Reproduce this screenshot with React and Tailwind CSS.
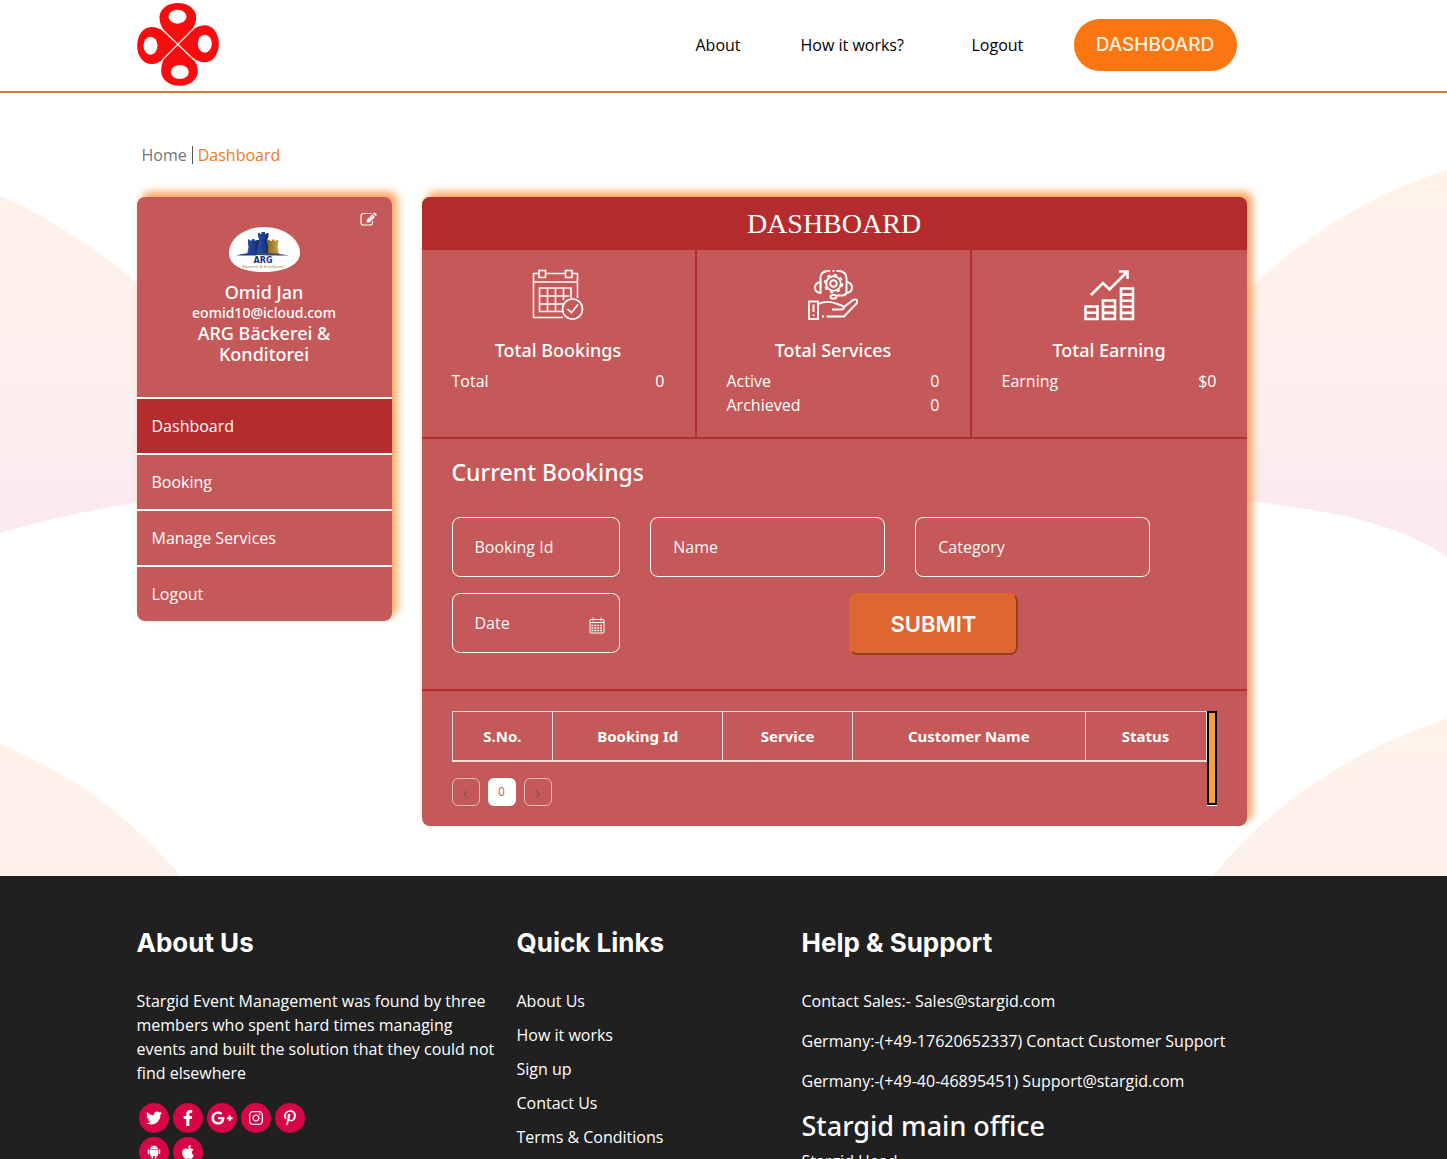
import React from "react";
import {
  FaApple,
  FaFacebookF,
  FaGooglePlusG,
  FaInstagram,
  FaPinterestP,
  FaTwitter,
} from "react-icons/fa";
import { IoLogoAndroid } from "react-icons/io";

function Logo() {
  return (
    <svg viewBox="52 9 245 249" className="h-[83px] w-[82px]" role="img" aria-label="Stargid">
      <g fill="#f70d0d">
        <path d="M174 133 L134 93 C124 82 119 68 119 52 C119 27 144 9 174 9 C204 9 229 27 229 52 C229 68 224 80 214 91 Z" />
        <path d="M174 133 L134 174 C128 184 124 197 124 213 C124 240 149 257 179 257 C210 257 234 240 234 213 C234 197 228 186 218 176 Z" />
        <path d="M174 133 L134 96 C122 86 108 81 94 81 C70 81 52 106 52 137 C52 168 70 192 95 192 C110 192 122 184 131 176 Z" />
        <path d="M174 133 L214 94 C226 82 240 76 255 76 C279 76 297 100 297 131 C297 163 279 187 255 187 C240 187 229 181 218 173 Z" />
      </g>
      <g fill="#fff">
        <ellipse cx="173" cy="50" rx="27" ry="21" />
        <ellipse cx="180" cy="216" rx="27" ry="21" />
        <ellipse cx="92" cy="137" rx="21" ry="27" />
        <ellipse cx="255" cy="131" rx="21" ry="27" />
      </g>
      <path d="M128 89 L224 181 M220 87 L128 179" stroke="#ffe6e4" strokeWidth="4" />
    </svg>
  );
}

function BakeryLogo() {
  return (
    <svg viewBox="0 0 71 45" className="h-[45px] w-[71px]" role="img" aria-label="ARG Bäckerei & Konditorei">
      <defs>
        <linearGradient id="tower" x1="0" x2="1">
          <stop offset="0" stopColor="#2d52a8" />
          <stop offset="1" stopColor="#142a72" />
        </linearGradient>
        <linearGradient id="gold" x1="0" x2="1">
          <stop offset="0" stopColor="#8d6a1e" />
          <stop offset="1" stopColor="#d3a545" />
        </linearGradient>
      </defs>
      <path d="M0 26 C0 11 16 0 35 0 C55 0 71 12 71 26 C71 38 55 45 35 45 C14 45 0 39 0 26 Z" fill="#fff" />
      <path d="M18 28 L19.500 20 L19 17 V12.500 H21 V13.500 H23 V12 H25.500 V13.500 H27.500 V13 H30 V28 Z" fill="url(#tower)" />
      <path d="M28 28 L30 12 L29 9.500 V6 H31 V7 H32.500 V5 H36 V7 H37.500 V6 H39.500 V9.500 L38.500 12 L39.500 26 Z" fill="url(#tower)" />
      <path d="M39 27.500 V13 H41 V14 H43 V12.500 H45.500 V14 H47 V13 H49 V17 L48.500 20 L50 27.500 Z" fill="url(#gold)" />
      <path d="M7 28.500 Q20 25 28 26 L27 28.500 Z" fill="#1d3a8c" />
      <path d="M28 26 Q45 25 60 28.500 H40 L28 28 Z" fill="#3c4a70" />
      <text x="34" y="36" textAnchor="middle" fontSize="8" fontWeight="800" fontFamily="DejaVu Sans" fill="#16307f">ARG</text>
      <text x="34" y="41" textAnchor="middle" fontSize="4" fontFamily="Noto Sans" fill="#bd9142">Bäckerei &amp; Konditorei</text>
    </svg>
  );
}

function EditIcon() {
  return (
    <svg viewBox="0 0 17 14" className="h-[14px] w-[17px]" aria-hidden="true">
      <path
        d="M11.500 1.500 H3.500 Q1 1.500 1 4 V10.500 Q1 13 3.500 13 H10 Q12.500 13 12.500 10.500 V9"
        fill="none"
        stroke="#fff"
        strokeWidth="1.200"
      />
      <path d="M12.300 2.200 L15 4.900 L9.300 10.600 H6.600 V7.900 Z M13 1.500 L13.900 0.600 Q14.500 0.200 15.100 0.700 L16.500 2.100 Q17 2.700 16.500 3.300 L15.700 4.200 Z" fill="#fff" />
      <path d="M12.300 4 L9 7.300" stroke="#c55858" strokeWidth="0.700" />
    </svg>
  );
}

function BookingsIcon() {
  return (
    <svg viewBox="0 0 52 52" className="size-[52px]" fill="none" stroke="#fff" strokeWidth="1.6" aria-hidden="true">
      <path d="M7 4.500 H1.500 V48.500 H31 M14 4.500 H33 M40 4.500 H45.500 V29 M1.500 13 H45.500" />
      <rect x="7" y="1.500" width="6.500" height="7" />
      <rect x="33.500" y="1.500" width="6.500" height="7" />
      <path d="M30 42.500 H7.500 V19 H39 V29 M7.500 27 H37 M7.500 35 H31 M15.500 19 V42.500 M23.500 19 V42.500 M31.500 19 V31" />
      <circle cx="40.500" cy="40" r="10" />
      <path d="M35.500 40 L39.500 43.500 L46 35.500" />
    </svg>
  );
}

function ServicesIcon() {
  return (
    <svg viewBox="0 0 52 52" className="size-[52px]" fill="none" stroke="#fff" strokeWidth="1.9" aria-hidden="true">
      <rect x="2" y="32.500" width="9" height="17.500" />
      <path d="M6.500 35.500 V43 M6.500 45.500 V47" />
      <path d="M11 35 Q21 31 29 34.500 L36 37 Q38 41 34 40.500 L25 40.500 M37 38 L46 31 Q51 29 50 34 L37 47.500 H19.500 M17 47.500 H15" />
      <path d="M13.500 19 V8 Q14 3 20 2 H23 M25.500 2 H27.500 M29.500 2 H33 Q39 3 39.500 9 V23 Q39 26.500 35 26.500 H30" />
      <path d="M13.500 13 Q8 14 8 18.500 Q8 23.500 13.500 24 Z M39.500 13 Q45 14 45 18.500 Q45 23.500 39.500 24" />
      <rect x="23.500" y="26" width="6" height="3.500" rx="1.700" />
      <circle cx="26.500" cy="14.500" r="3.300" />
      <circle cx="26.500" cy="14.500" r="7.300" />
      <circle cx="26.500" cy="14.500" r="8.900" strokeWidth="1.800" strokeDasharray="3.200 3.790" />
    </svg>
  );
}

function EarningIcon() {
  return (
    <svg viewBox="0 0 52 52" className="size-[52px]" fill="none" stroke="#fff" strokeWidth="2.600" aria-hidden="true">
      <path d="M8 26 L20 14 L26.500 20.500 L43 4 M36 2.500 H44.500 V10" />
      <path d="M2.500 37.500 H14.500 V50 H2.500 Z M2.500 43.700 H14.500" />
      <path d="M20 31.500 H32 V50 H20 Z M20 37.700 H32 M20 43.900 H32" />
      <path d="M38 19.500 H50 V50 H38 Z M38 25.600 H50 M38 31.700 H50 M38 37.800 H50 M38 43.900 H50" />
    </svg>
  );
}

function CalendarIcon() {
  return (
    <svg viewBox="0 0 16 17" className="h-[17px] w-4" fill="none" stroke="#fff" aria-hidden="true">
      <rect x="1" y="2.500" width="14" height="13.500" rx="1" />
      <path d="M1 5.500 H15 M4 0.500 V4 M12 0.500 V4" />
      <path d="M2.500 8.500 H13.500 M2.500 11 H13.500 M2.500 13.500 H13.500" strokeWidth="1.500" strokeDasharray="1.800 1.100" />
    </svg>
  );
}

function Backdrop() {
  return (
    <svg
      viewBox="0 0 1447 783"
      preserveAspectRatio="none"
      className="absolute inset-0 -z-10 h-full w-full"
      aria-hidden="true"
    >
      <defs>
        <linearGradient id="wash" gradientUnits="userSpaceOnUse" x1="0" y1="80" x2="0" y2="460">
          <stop offset="0" stopColor="#fff3e9" />
          <stop offset="0.550" stopColor="#fcefee" />
          <stop offset="1" stopColor="#fae9f0" />
        </linearGradient>
        <linearGradient id="wash2" gradientUnits="userSpaceOnUse" x1="0" y1="629" x2="0" y2="1009">
          <stop offset="0" stopColor="#fff3e9" />
          <stop offset="0.550" stopColor="#fcefee" />
          <stop offset="1" stopColor="#fae9f0" />
        </linearGradient>
      </defs>
      <path fill="url(#wash)" d="M0 103 Q70 133 137 190 L300 300 V400 Q200 400 137 410 Q70 420 0 440 Z" />
      <path fill="url(#wash)" d="M1447 77 Q1340 110 1253 193 L1150 280 V400 Q1200 402 1253 409 Q1395 424 1447 465 Z" />
      <path fill="url(#wash2)" d="M0 651 Q105 694 180 783 H0 Z" />
      <path fill="url(#wash2)" d="M1447 626 Q1302 674 1213 783 H1447 Z" />
    </svg>
  );
}

const menu = ["Dashboard", "Booking", "Manage Services", "Logout"];

const stats = [
  { title: "Total Bookings", Icon: BookingsIcon, rows: [["Total", "0"]] },
  { title: "Total Services", Icon: ServicesIcon, rows: [["Active", "0"], ["Archieved", "0"]] },
  { title: "Total Earning", Icon: EarningIcon, rows: [["Earning", "$0"]] },
];

const columns = [
  ["S.No.", "w-[101px]"],
  ["Booking Id", "w-[170px]"],
  ["Service", "w-[130px]"],
  ["Customer Name", "w-[233px]"],
  ["Status", "w-[121px]"],
];

const socials = [
  ["Twitter", FaTwitter],
  ["Facebook", FaFacebookF],
  ["Google Plus", FaGooglePlusG],
  ["Instagram", FaInstagram],
  ["Pinterest", FaPinterestP],
  ["Android", IoLogoAndroid],
  ["Apple", FaApple],
];

const quickLinks = ["About Us", "How it works", "Sign up", "Contact Us", "Terms & Conditions"];

function Field({ label, className, children }) {
  return (
    <label className={"relative block " + className}>
      <input
        type="text"
        aria-label={label}
        placeholder={label}
        className="h-[60px] w-full rounded-lg border border-white bg-transparent px-[22px] text-white placeholder:text-white placeholder:opacity-95"
      />
      {children}
    </label>
  );
}

function Header() {
  return (
    <header className="border-b-2 border-[#d07b3e] bg-white pr-16">
      <div className="mx-auto flex h-[91px] max-w-[1110px] items-start justify-between">
        <a href="#" className="pt-[3px]">
          <Logo />
        </a>
        <nav className="flex items-center pt-[19px] pr-[10px] text-black">
          <a href="#" className="w-[105px]">About</a>
          <a href="#" className="w-[171px]">How it works?</a>
          <a href="#" className="w-[102px]">Logout</a>
          <a
            href="#"
            className="flex h-[52px] w-[163px] items-center justify-center rounded-full bg-[#f97610] font-[Inter] text-[19px] font-medium text-[#fff3e0]"
          >
            DASHBOARD
          </a>
        </nav>
      </div>
    </header>
  );
}

function Sidebar() {
  return (
    <aside className="w-[255px] shrink-0 overflow-visible rounded-lg bg-[#c55858] text-white shadow-[5px_-5px_8px_#ffa057]">
      <div className="relative flex h-[200px] flex-col items-center pt-[30px] text-center font-['Noto_Sans'] font-medium">
        <button type="button" aria-label="Edit profile" className="absolute top-[15px] right-[15px]">
          <EditIcon />
        </button>
        <BakeryLogo />
        <h2 className="mt-[10px] text-[18px] leading-[21px]">Omid Jan</h2>
        <p className="text-[14px] leading-5">eomid10@icloud.com</p>
        <p className="w-[150px] text-[18px] leading-[21px]">ARG Bäckerei &amp; Konditorei</p>
      </div>
      <nav>
        {menu.map((item, i) => (
          <a
            key={item}
            href="#"
            className={
              "flex h-14 items-center border-t-2 border-white px-[15px] " +
              (i === 0 ? "bg-[#b52c2e]" : "")
            }
          >
            {item}
          </a>
        ))}
      </nav>
    </aside>
  );
}

function Stats() {
  return (
    <div className="grid grid-cols-3 border-b-2 border-[#b52c2e]">
      {stats.map(({ title, Icon, rows }, i) => (
        <section
          key={title}
          className={"h-[187px] px-[30px] pt-[19px] " + (i < 2 ? "border-r-2 border-[#b52c2e]" : "")}
        >
          <div className="flex justify-center">
            <Icon />
          </div>
          <h3 className="mt-[17px] mb-[7px] text-center font-['Noto_Sans'] text-[18px] leading-6 font-medium">{title}</h3>
          <dl>
            {rows.map(([k, v]) => (
              <div key={k} className="flex justify-between leading-6">
                <dt>{k}</dt>
                <dd>{v}</dd>
              </div>
            ))}
          </dl>
        </section>
      ))}
    </div>
  );
}

function Bookings() {
  return (
    <>
      <section className="border-b-2 border-[#b52c2e] px-[30px] pt-[17px] pb-[34px]">
        <h2 className="mb-[29px] font-['Noto_Sans'] text-[23px] leading-8 font-medium">Current Bookings</h2>
        <form className="grid grid-cols-12 gap-x-[30px] gap-y-4" onSubmit={(e) => e.preventDefault()}>
          <Field label="Booking Id" className="col-span-3" />
          <Field label="Name" className="col-span-4" />
          <Field label="Category" className="col-span-4" />
          <Field label="Date" className="col-span-3 col-start-1">
            <span className="absolute top-6 right-[15px]">
              <CalendarIcon />
            </span>
          </Field>
          <button
            type="submit"
            className="col-span-3 col-start-7 h-[62px] rounded-lg border-2 border-t-[#de6630] border-r-[#98401e] border-b-[#98401e] border-l-[#de6630] bg-[#de6630] font-[Inter] text-[22px] font-semibold text-white"
          >
            SUBMIT
          </button>
        </form>
      </section>
      <section className="px-[30px] py-5">
        <div className="flex">
          <div className="min-w-0 flex-1">
            <table className="w-full border-collapse border border-b-2 border-[#f0dcdc]">
              <thead>
                <tr>
                  {columns.map(([name, width]) => (
                    <th
                      key={name}
                      scope="col"
                      className={
                        "h-[49px] border border-b-2 border-[#f0dcdc] font-['Noto_Sans'] text-[15px] leading-6 font-bold " +
                        width
                      }
                    >
                      {name}
                    </th>
                  ))}
                </tr>
              </thead>
            </table>
            <nav aria-label="Pages" className="mt-4 flex gap-2 text-[12px]">
              <button type="button" aria-label="Previous page" className="size-7 rounded-md border border-[#e6bcbc] text-[18px] leading-6 text-[#7d5555]">
                ‹
              </button>
              <button type="button" className="size-7 rounded-md bg-white text-[#c55858]">
                0
              </button>
              <button type="button" aria-label="Next page" className="size-7 rounded-md border border-[#e6bcbc] text-[18px] leading-6 text-[#7d5555]">
                ›
              </button>
            </nav>
          </div>
          <div className="w-[10px] border-b border-white">
            <div className="h-full border-2 border-black bg-[#f59e42]" />
          </div>
        </div>
      </section>
    </>
  );
}

function Footer() {
  return (
    <footer className="bg-[#202020] pr-16 text-white">
      <div className="mx-auto grid max-w-[1110px] grid-cols-12 gap-x-[30px] pt-[50px]">
        <section className="col-span-4">
          <h2 className="mb-[29px] font-[Inter] text-[26px] leading-[34px] font-bold">About Us</h2>
          <p className="leading-6 whitespace-nowrap">
            Stargid Event Management was found by three
            <br />
            members who spent hard times managing
            <br />
            events and built the solution that they could not
            <br />
            find elsewhere
          </p>
          <div className="mt-[18px] flex w-[172px] flex-wrap gap-1 pl-[2px]">
            {socials.map(([name, Icon]) => (
              <a
                key={name}
                href="#"
                aria-label={name}
                className={
                  "flex size-[30px] items-center justify-center rounded-full bg-[#d80545] " +
                  (name === "Google Plus" ? "text-[22px]" : name === "Android" ? "text-[18px]" : "text-[16px]")
                }
              >
                <Icon />
              </a>
            ))}
          </div>
        </section>
        <section className="col-span-3">
          <h2 className="mb-[29px] font-[Inter] text-[26px] leading-[34px] font-bold">Quick Links</h2>
          <ul className="space-y-[10px] leading-6">
            {quickLinks.map((l) => (
              <li key={l}>
                <a href="#">{l}</a>
              </li>
            ))}
          </ul>
        </section>
        <section className="col-span-5">
          <h2 className="mb-[29px] font-[Inter] text-[26px] leading-[34px] font-bold">Help &amp; Support</h2>
          <div className="space-y-4 leading-6 whitespace-nowrap">
            <p>Contact Sales:- Sales@stargid.com</p>
            <p>Germany:-(+49-17620652337) Contact Customer Support</p>
            <p>Germany:-(+49-40-46895451) Support@stargid.com</p>
          </div>
          <h2 className="mt-4 mb-[6px] font-['Noto_Sans'] text-[27px] leading-[34px] font-medium">Stargid main office</h2>
          <p className="leading-6">Stargid Head</p>
        </section>
      </div>
    </footer>
  );
}

export default function App() {
  return (
    <div className="h-screen overflow-hidden bg-white font-['Open_Sans',sans-serif] text-[16px]">
      <Header />
      <main className="relative isolate pr-16">
        <Backdrop />
        <div className="mx-auto max-w-[1110px] pt-[50px] pb-[50px]">
          <div className="mb-[30px] flex items-center pl-[5px] leading-6">
            <a href="#" className="text-[#757575]">Home</a>
            <span className="mx-[5px] h-[18px] w-px bg-[#555]" />
            <a href="#" className="text-[#f07a1c]">Dashboard</a>
          </div>
          <div className="flex items-start gap-[30px]">
            <Sidebar />
            <div className="min-w-0 flex-1 rounded-lg bg-[#c55858] text-white shadow-[5px_-5px_8px_#ffa057]">
              <h1 className="rounded-t-lg bg-[#b52c2e] text-center font-['Liberation_Serif'] text-[28px] leading-[53px]">
                DASHBOARD
              </h1>
              <Stats />
              <Bookings />
            </div>
          </div>
        </div>
      </main>
      <Footer />
    </div>
  );
}
